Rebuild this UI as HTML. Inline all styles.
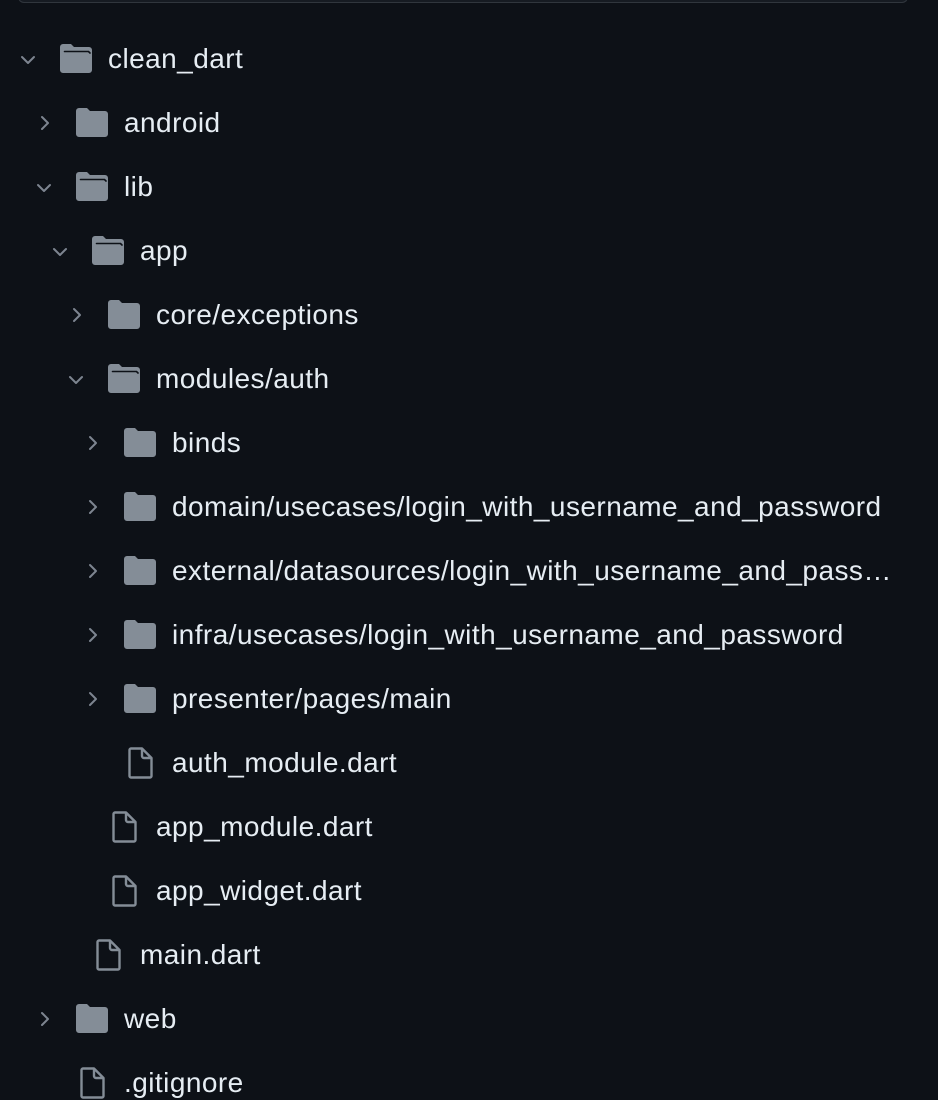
<!DOCTYPE html>
<html><head><meta charset="utf-8"><style>
html,body{margin:0;padding:0;background:#0d1117;width:938px;height:1100px;overflow:hidden;position:relative;font-family:"Liberation Sans",sans-serif;}
.top{position:absolute;left:18px;top:-10px;width:888px;height:12px;border:1px solid #30363d;border-top:none;border-radius:0 0 6px 6px;background:#161b22;}
.row{position:absolute;left:0;height:64px;width:938px;}
.t{position:absolute;top:16px;line-height:34px;font-size:28px;letter-spacing:0.45px;color:#e6edf3;white-space:nowrap;overflow:hidden;text-overflow:ellipsis;}
svg{position:absolute;}
</style></head><body>
<div class="top"></div>
<div id="c"></div>
<script>
var rows=[
[0,'o','clean_dart'],[1,'c','android'],[1,'o','lib'],[2,'o','app'],[3,'c','core/exceptions'],[3,'o','modules/auth'],
[4,'c','binds'],[4,'c','domain/usecases/login_with_username_and_password'],[4,'c','external/datasources/login_with_username_and_password'],
[4,'c','infra/usecases/login_with_username_and_password'],[4,'c','presenter/pages/main'],[4,'f','auth_module.dart'],
[3,'f','app_module.dart'],[3,'f','app_widget.dart'],[2,'f','main.dart'],[1,'c','web'],[1,'f','.gitignore']];
var h='';
var fold='<path d="M0 3a3 3 0 0 1 3-3h8l3 3h15a3 3 0 0 1 3 3v20a3 3 0 0 1-3 3H3a3 3 0 0 1-3-3z" fill="#848d97"/>';
rows.forEach(function(r,i){
 var L=r[0],y=26+64*i,o=16*L;
 h+='<div class="row" style="top:'+y+'px">';
 if(r[1]=='o'){
  h+='<svg style="left:'+(20+o)+'px;top:26px" width="16" height="16" viewBox="0 0 16 16"><path d="M2 5l6 6 6-6" fill="none" stroke="#7d8590" stroke-width="2" stroke-linecap="round" stroke-linejoin="round"/></svg>';
  h+='<svg style="left:'+(60+o)+'px;top:18px" width="32" height="29" viewBox="0 0 32 29">'+fold+'<path d="M4.5 7.5H28.5l1.5 1.5" fill="none" stroke="#0d1117" stroke-width="1.6" stroke-linecap="round"/></svg>';
 } else if(r[1]=='c'){
  h+='<svg style="left:'+(21+o)+'px;top:25px" width="16" height="16" viewBox="0 0 16 16"><path d="M5 2l6 6-6 6" fill="none" stroke="#7d8590" stroke-width="2" stroke-linecap="round" stroke-linejoin="round"/></svg>';
  h+='<svg style="left:'+(60+o)+'px;top:18px" width="32" height="29" viewBox="0 0 32 29">'+fold+'</svg>';
 } else {
  h+='<svg style="left:'+(64+o)+'px;top:17px" width="26" height="32" viewBox="0 0 26 32"><path d="M3 1.5h11l9.5 9.5v18a1.5 1.5 0 0 1-1.5 1.5H3A1.5 1.5 0 0 1 1.5 29V3A1.5 1.5 0 0 1 3 1.5z M14 1.5V9a2 2 0 0 0 2 2h7.5" fill="none" stroke="#848d97" stroke-width="2.4" stroke-linejoin="round"/></svg>';
 }
 h+='<div class="t" style="left:'+(108+o)+'px;max-width:'+(894-108-o)+'px">'+r[2]+'</div></div>';
});
document.getElementById('c').innerHTML=h;
</script>
</body></html>
